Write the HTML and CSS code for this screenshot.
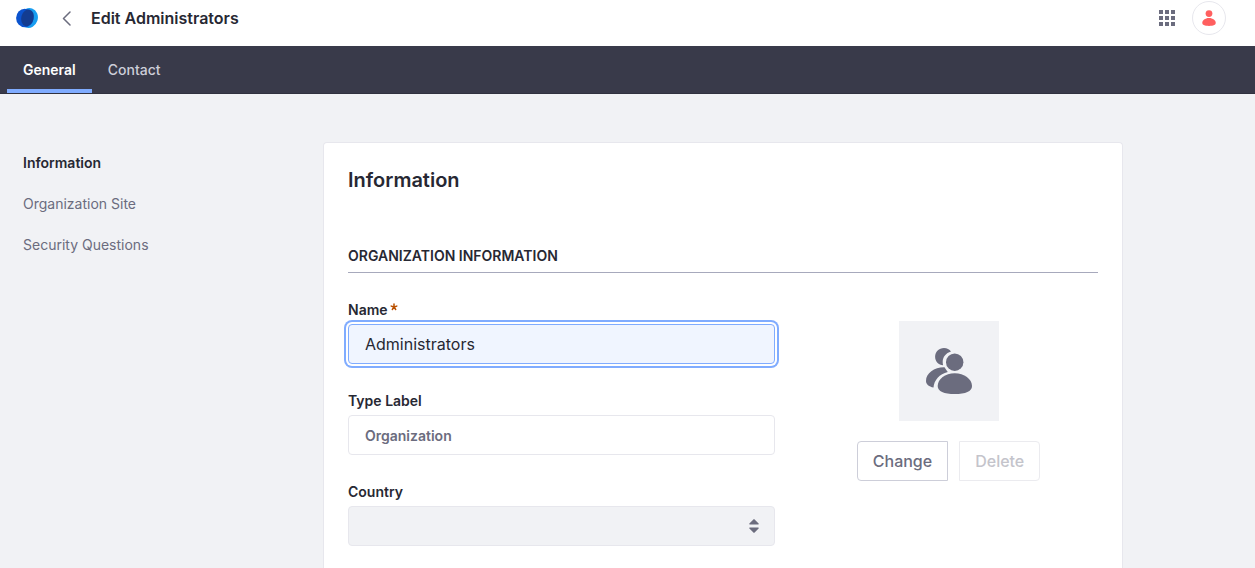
FILE: index.html
```html
<!DOCTYPE html>
<html lang="en">
<head>
<meta charset="utf-8">
<meta name="viewport" content="width=device-width, initial-scale=1">
<title>Edit Administrators</title>
<link rel="stylesheet" href="styles.css">
</head>
<body>
<header class="topbar">
  <svg class="logo" viewBox="0 0 24 24" aria-hidden="true">
    <ellipse cx="14" cy="12" rx="8.800" ry="10" transform="rotate(18 14 12)" fill="#189df0"/>
    <ellipse cx="9.800" cy="12" rx="8.700" ry="9.200" fill="#0b53ce"/>
    <ellipse cx="12.500" cy="11.800" rx="6.200" ry="8.500" transform="rotate(16 12.500 11.800)" fill="#133c91"/>
  </svg>
  <a class="back" href="#" aria-label="Back">
    <svg viewBox="0 0 16 16" aria-hidden="true"><path d="M11 2 4.500 8.500 11 15" fill="none" stroke="#6b6c7e" stroke-width="1.500" stroke-linecap="round" stroke-linejoin="round"/></svg>
  </a>
  <h1 class="page-title">Edit Administrators</h1>
  <button class="apps" type="button" aria-label="Applications">
    <svg viewBox="0 0 16 16" fill="#6b6c7e" aria-hidden="true"><path d="M0 0h4v4H0zM6 0h4v4H6zM12 0h4v4h-4zM0 6h4v4H0zM6 6h4v4H6zM12 6h4v4h-4zM0 12h4v4H0zM6 12h4v4H6zM12 12h4v4h-4z"/></svg>
  </button>
  <button class="avatar" type="button" aria-label="User menu">
    <svg viewBox="0 0 16 16" fill="#ff5f5f" aria-hidden="true"><circle cx="8" cy="4" r="3"/><path d="M8 8c3.500 0 6 2.200 6 4.300C14 14.300 12 15 8 15s-6-.7-6-2.700C2 10.200 4.500 8 8 8z"/></svg>
  </button>
</header>
<nav class="tabs" aria-label="Sections">
  <a class="tab tab-active" href="#" aria-current="page">General</a>
  <a class="tab" href="#">Contact</a>
</nav>
<div class="layout">
  <nav class="sidebar" aria-label="General">
    <a class="side-link side-active" href="#" aria-current="page">Information</a>
    <a class="side-link" href="#">Organization Site</a>
    <a class="side-link" href="#">Security Questions</a>
  </nav>
  <main class="sheet">
    <h2 class="sheet-title">Information</h2>
    <h3 class="sheet-subtitle">Organization Information</h3>
    <form class="form-grid">
      <div class="fields">
        <div class="field">
          <label class="label" for="name">Name <svg class="required" viewBox="0 0 8 8" aria-hidden="true"><path d="M4 4V1M4 4 1.200 3.100M4 4l2.800-.9M4 4 2.300 6.500M4 4l1.700 2.500" stroke="#b95000" stroke-width="1.500" stroke-linecap="round"/></svg></label>
          <input class="control control-focus" id="name" type="text" value="Administrators" required>
        </div>
        <div class="field">
          <label class="label" for="type">Type Label</label>
          <input class="control control-readonly" id="type" type="text" value="Organization" readonly>
        </div>
        <div class="field">
          <label class="label" for="country">Country</label>
          <span class="select-wrap">
            <select class="control control-select" id="country"><option value=""></option></select>
            <svg class="caret" viewBox="0 0 10 14" fill="#6b6c7e" aria-hidden="true"><path d="M4.400.4a.8.8 0 0 1 1.200 0l4 4.100c.4.500.2 1-.4 1H.8c-.6 0-.8-.5-.4-1zM4.400 13.600a.8.8 0 0 0 1.200 0l4-4.100c.4-.5.2-1-.4-1H.8c-.6 0-.8.5-.4 1z"/></svg>
          </span>
        </div>
      </div>
      <div class="picture">
        <div class="thumb">
          <svg viewBox="0 0 48 48" fill="#6b6c7e" aria-hidden="true">
            <path d="M26 4.600C24.400 2.400 22 1 19 1c-5 0-8.900 3.700-8.900 8.700 0 4.800 3.500 8.300 8 8.500-.3-1.200-.4-2.300-.4-3.500 0-4.300 3.200-8.800 8.300-10.100z"/>
            <path d="M19.500 20.300C9.500 20.100 1 26 1 34c0 3.300 3 5.600 7.500 6.600C9 33 14.500 26.800 22.800 24.900Q21 22.800 19.500 20.300z"/>
            <circle cx="29.700" cy="15.200" r="8.700"/>
            <path d="M29.700 26.200c9.500 0 17.300 5.700 17.300 12.800 0 5.500-6.500 8-17.300 8s-17-2.500-17-8c0-7.100 7.500-12.800 17-12.800z"/>
          </svg>
        </div>
        <div class="buttons">
          <button class="btn btn-first" type="button">Change</button>
          <button class="btn btn-last" type="button" disabled>Delete</button>
        </div>
      </div>
    </form>
  </main>
</div>
</body>
</html>
```
FILE: styles.css
```css
*, *::before, *::after {
  box-sizing: border-box;
}

body {
  display: flex;
  flex-direction: column;
  min-height: 100vh;
  margin: 0;
  background: #f1f2f5;
  color: #272833;
  font-family: Inter, Roboto, sans-serif;
  font-size: 14px;
  line-height: 20px;
}

h1, h2, h3 {
  margin: 0;
}

a {
  color: inherit;
  text-decoration: none;
}

svg {
  display: block;
}

.topbar {
  display: flex;
  align-items: center;
  height: 46px;
  padding: 0 29px 10px 15px;
  background: #fff;
}

.logo {
  width: 24px;
  height: 24px;
}

.back {
  margin-left: 20px;
}

.back svg {
  width: 16px;
  height: 16px;
}

.page-title {
  flex: 1;
  margin-left: 16px;
  font-size: 16px;
  font-weight: 600;
}

.apps {
  padding: 0;
  border: 0;
  background: none;
}

.apps svg {
  width: 16px;
  height: 16px;
}

.avatar {
  display: grid;
  place-items: center;
  width: 34px;
  height: 34px;
  margin-left: 17px;
  padding: 0;
  border: 1px solid #e7e7ed;
  border-radius: 50%;
  background: #fff;
}

.avatar svg {
  width: 18px;
  height: 18px;
}

.tabs {
  display: flex;
  height: 48px;
  padding: 0 7px;
  border-bottom: 1px solid #30313f;
  background: #393a4a;
}

.tab {
  display: flex;
  align-items: center;
  padding: 4px 16px 0;
  border-bottom: 4px solid transparent;
  color: #cdced9;
  font-weight: 500;
}

.tab-active {
  border-color: #80acff;
  color: #fff;
  font-weight: 600;
}

.layout {
  display: flex;
  flex: 1;
  padding: 48px 23px 0;
}

.sidebar {
  display: flex;
  flex: 0 0 300px;
  flex-direction: column;
  gap: 21px;
  padding-top: 11px;
  color: #6b6c7e;
}

.side-active {
  color: #272833;
  font-weight: 600;
}

.sheet {
  flex: 1;
  max-width: 800px;
  padding: 24px 24px 22px;
  border: 1px solid #e7e7ed;
  border-bottom: 0;
  border-radius: 4px 4px 0 0;
  background: #fff;
}

.sheet-title {
  font-size: 20px;
  font-weight: 600;
  line-height: 26px;
}

.sheet-subtitle {
  margin: 50px 0 27px;
  padding: 3px 0 6px;
  border-bottom: 1px solid #a7a9bc;
  font-size: 14px;
  font-weight: 600;
  text-transform: uppercase;
}

.form-grid {
  display: grid;
  grid-template-columns: 10fr 7fr;
  column-gap: 24px;
}

.fields {
  display: flex;
  flex-direction: column;
  gap: 27px;
}

.field {
  display: flex;
  flex-direction: column;
  gap: 4px;
}

.label {
  display: flex;
  gap: 2px;
  font-weight: 600;
}

.required {
  width: 8px;
  height: 8px;
  margin-top: 3px;
}

.control {
  width: 100%;
  height: 40px;
  padding: 0 16px;
  border: 1px solid #e7e7ed;
  border-radius: 4px;
  outline: 0;
  background: #fff;
  color: #272833;
  font: 400 16px Inter, Roboto, sans-serif;
}

.control-focus {
  border-color: #80acff;
  background: #f0f5ff;
  box-shadow: 0 0 0 2px #fff, 0 0 0 4px #80acff;
}

.control-readonly {
  color: #6b6c7e;
  font-size: 14px;
  font-weight: 600;
}

.select-wrap {
  position: relative;
}

.control-select {
  display: block;
  appearance: none;
  background: #f1f2f5;
}

.caret {
  position: absolute;
  top: 13px;
  right: 16px;
  width: 10px;
  height: 14px;
  pointer-events: none;
}

.picture {
  display: flex;
  flex-direction: column;
  align-items: center;
  gap: 20px;
  padding-top: 21px;
}

.thumb {
  display: grid;
  place-items: center;
  width: 100px;
  height: 100px;
  background: #f1f2f5;
}

.thumb svg {
  width: 48px;
  height: 48px;
}

.buttons {
  display: flex;
  gap: 11px;
}

.btn {
  height: 40px;
  padding: 0 15px;
  border: 1px solid #cdced9;
  background: #fff;
  color: #6b6c7e;
  font: 500 16px Inter, Roboto, sans-serif;
}

.btn-first {
  border-radius: 4px 0 0 4px;
}

.btn-last {
  border-radius: 0 4px 4px 0;
}

.btn:disabled {
  border-color: #ebebef;
  color: #c4c4cb;
}
```
